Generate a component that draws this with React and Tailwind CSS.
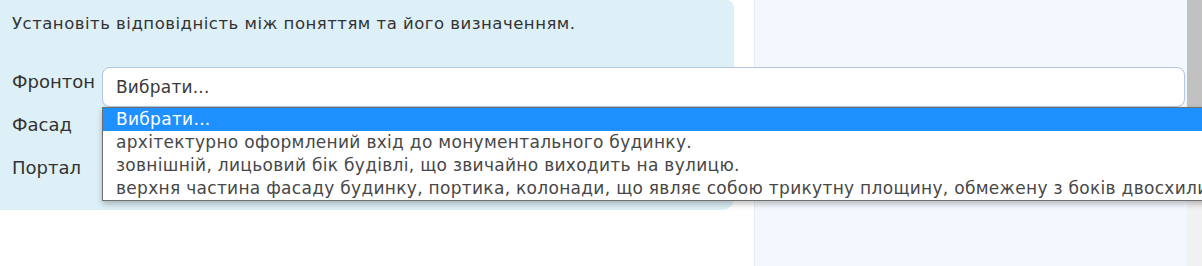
import React from "react";

const options = [
  "Вибрати...",
  "архітектурно оформлений вхід до монументального будинку.",
  "зовнішній, лицьовий бік будівлі, що звичайно виходить на вулицю.",
  "верхня частина фасаду будинку, портика, колонади, що являє собою трикутну площину, обмежену з боків двосхилим дахом, а в основі карнизом.",
];

const terms = ["Фронтон", "Фасад", "Портал"];

// rows under the open list are covered, so only the first shows its value
function SelectBox({ showValue }) {
  return (
    <div className="relative z-10 w-[1083px] h-[40px] shrink-0 rounded-[8px] border border-[#b3c8e6] bg-white flex items-center pl-[13px] pt-[2px] text-[17px] tracking-[0.2px] text-[#3a3a3a] shadow-[0_1px_2px_rgba(0,0,0,0.06)]">
      {showValue ? "Вибрати..." : null}
    </div>
  );
}

function Dropdown() {
  return (
    <div className="absolute z-20 left-[102px] top-[107px] w-[1200px] h-[94px] bg-white border border-[#707070] shadow-[0_3px_6px_rgba(0,0,0,0.25)] text-[17px] tracking-[0.3px] leading-[23px] text-[#474747] whitespace-nowrap overflow-hidden">
      {options.map((opt, i) => (
        <div
          key={i}
          className={
            i === 0
              ? "pl-[13px] h-[23px] bg-[#1e90ff] text-white"
              : "pl-[13px] h-[23px]"
          }
        >
          {opt}
        </div>
      ))}
    </div>
  );
}

export default function App() {
  return (
    <div
      className="relative w-[1202px] h-[266px] flex bg-white overflow-hidden"
      style={{ fontFamily: "'DejaVu Sans', sans-serif" }}
    >
      <div className="w-[754px] shrink-0">
        <div className="w-[734px] h-[210px] bg-[#def0f7] rounded-tr-[8px] rounded-br-[12px] pt-[13px] pl-[12px]">
          <p className="text-[16.5px] tracking-[0.5px] leading-[22px] text-[#333]">
            Установіть відповідність між поняттям та його визначенням.
          </p>
          <div className="mt-[32px] flex flex-col gap-[3px]">
            {terms.map((t, i) => (
              <div key={t} className="flex items-start gap-[6px]">
                <span className="w-[84px] shrink-0 pt-[3px] text-[18px] leading-[24px] text-[#333] whitespace-nowrap">
                  {t}
                </span>
                <SelectBox showValue={i === 0} />
              </div>
            ))}
          </div>
        </div>
      </div>
      <div className="flex-1 border-l border-[#e6edf5] bg-[#f3f8fe]" />
      <div className="w-[15px] shrink-0 bg-[#f1f1f1] flex flex-col">
        <div className="h-[160px] bg-[#c1c1c1]" />
      </div>
      <Dropdown />
    </div>
  );
}
